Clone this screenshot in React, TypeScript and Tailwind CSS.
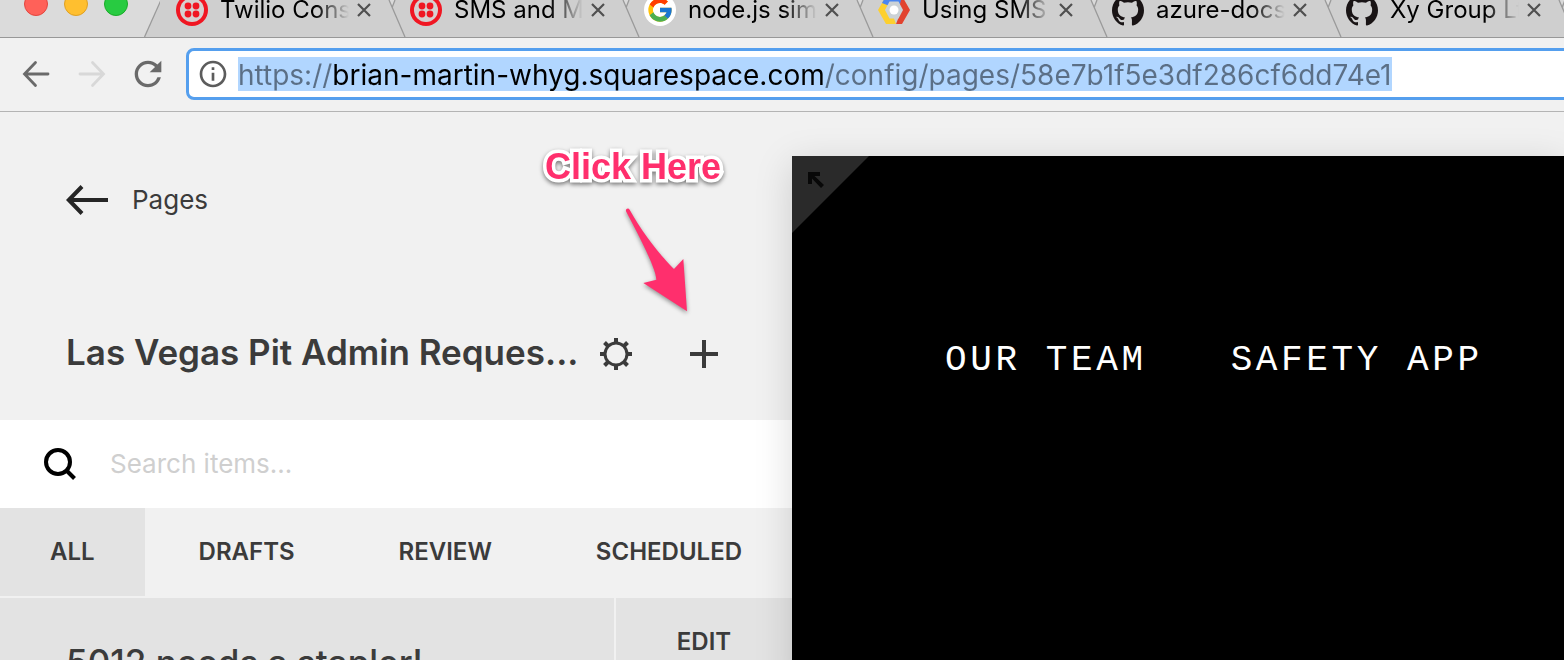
import React from "react";
import { FcGoogle } from "react-icons/fc";
import { SiGithub } from "react-icons/si";
import { MdInfoOutline, MdRefresh } from "react-icons/md";

function TwilioIcon() {
  return (
    <svg viewBox="0 0 32 32" className="size-8" aria-hidden="true">
      <circle cx="16" cy="16" r="16" fill="#f01622" />
      <circle cx="16" cy="16" r="12" fill="#d6d0d0" />
      <g fill="#f01622">
        <circle cx="12" cy="12" r="3.4" />
        <circle cx="20" cy="12" r="3.4" />
        <circle cx="12" cy="20" r="3.4" />
        <circle cx="20" cy="20" r="3.4" />
      </g>
    </svg>
  );
}

function GoogleIcon() {
  return (
    <span className="flex size-8 items-center justify-center rounded-full bg-white">
      <FcGoogle className="size-7" aria-hidden="true" />
    </span>
  );
}

function CloudIcon() {
  return (
    <svg viewBox="0 0 32 32" className="size-8" aria-hidden="true">
      <polygon points="8,2 0,16 8,30 18,30 13,16" fill="#fdd02f" />
      <polygon points="8,2 4,9 14,13 24,9 26,5 24,2" fill="#4a86f0" />
      <polygon points="24,2 32,16 24,30 18,30 22,20 22,10" fill="#e2432f" />
      <polygon points="11.5,7.5 20.5,7.5 25,16 20.5,24.5 11.5,24.5 7,16" fill="#cbd2d6" />
      <circle cx="16" cy="16" r="4.5" fill="#ffffff" />
    </svg>
  );
}

function GithubIcon() {
  return <SiGithub className="size-8 text-[#191415]" aria-hidden="true" />;
}

const tabs = [
  { title: "Twilio Cons", icon: <TwilioIcon /> },
  { title: "SMS and M", icon: <TwilioIcon /> },
  { title: "node.js sim", icon: <GoogleIcon /> },
  { title: "Using SMS", icon: <CloudIcon /> },
  { title: "azure-docs", icon: <GithubIcon /> },
  { title: "Xy Group Lt", icon: <GithubIcon /> },
];

function BrowserTab({ title, icon }: { title: string; icon: React.ReactNode }) {
  return (
    <div className="relative flex h-5 w-[234px] flex-none items-center pl-4">
      <span className="flex-none">{icon}</span>
      <a
        href="#"
        className="ml-3 w-[129px] flex-none whitespace-nowrap text-2xl text-black [mask-image:linear-gradient(to_right,black_74%,transparent)]"
      >
        {title}
      </a>
      <button type="button" aria-label={`Close ${title}`} className="ml-2 flex-none">
        <svg viewBox="0 0 14 14" className="size-[14px]" aria-hidden="true">
          <path d="M1 1L13 13M13 1L1 13" stroke="#505050" strokeWidth="2.2" />
        </svg>
      </button>
      <svg viewBox="0 0 20 37" className="absolute top-0 -right-3 h-[37px] w-5" aria-hidden="true">
        <path d="M3 0L6.5 7L9 0Z" fill="#dadada" />
        <path d="M3 0L19 37M9 0L6.3 7" fill="none" stroke="#9a9a9a" strokeWidth="1.3" />
      </svg>
    </div>
  );
}

function TabStrip() {
  return (
    <div className="flex h-[38px] flex-none overflow-hidden border-b border-[#989898] bg-[#dbdbdb]">
      <div className="flex h-2 w-[144px] flex-none items-center gap-4 pl-6">
        <button type="button" aria-label="Close window" className="size-6 flex-none rounded-full border border-[#e2463f] bg-[#ff6159]" />
        <button type="button" aria-label="Minimise window" className="size-6 flex-none rounded-full border border-[#dfa023] bg-[#ffbf2f]" />
        <button type="button" aria-label="Zoom window" className="size-6 flex-none rounded-full border border-[#1aab29] bg-[#28cb41]" />
      </div>
      <svg viewBox="0 0 16 37" className="h-[37px] w-4 flex-none" aria-hidden="true">
        <path d="M17 0L0.5 37H18V0Z" fill="#cfcfcf" />
        <path d="M17 0L0.5 37" stroke="#9a9a9a" strokeWidth="1.3" />
      </svg>
      <nav aria-label="Tabs" className="flex flex-1 bg-[#cfcfcf]">
        {tabs.map((tab) => (
          <BrowserTab key={tab.title} {...tab} />
        ))}
      </nav>
    </div>
  );
}

function Toolbar() {
  return (
    <div className="flex h-[74px] flex-none items-center overflow-hidden border-b border-[#b4b4b4] bg-[#f1f1f1] pb-[2px]">
      <button type="button" aria-label="Back" className="ml-[22px]">
        <svg viewBox="0 0 28 28" className="size-7" fill="none" stroke="#6a6a6a" strokeWidth="2.8" strokeLinecap="round" aria-hidden="true">
          <path d="M26 14H3M13.5 2.5L2.5 14L13.5 25.5" />
        </svg>
      </button>
      <button type="button" aria-label="Forward" className="ml-7">
        <svg viewBox="0 0 28 28" className="size-7" fill="none" stroke="#d8d8d8" strokeWidth="2.8" strokeLinecap="round" aria-hidden="true">
          <path d="M2 14H25M14.5 2.5L25.5 14L14.5 25.5" />
        </svg>
      </button>
      <button type="button" aria-label="Reload" className="ml-[22px]">
        <MdRefresh className="size-10 text-[#6a6a6a]" aria-hidden="true" />
      </button>
      <div className="-mr-2 ml-[18px] flex h-[52px] flex-1 items-center rounded-lg border-[3px] border-[#559fee] bg-white pl-2">
        <MdInfoOutline className="size-8 flex-none text-[#5c5c5c]" aria-hidden="true" />
        <div className="ml-[9px] flex h-[34px] items-center bg-[#b1d6ff]">
          <input
            type="text"
            aria-label="Address"
            defaultValue="https://brian-martin-whyg.squarespace.com/config/pages/58e7b1f5e3df286cf6dd74e1"
            className="h-[34px] bg-[linear-gradient(to_right,#5b6f86_94px,#000_94px,#000_586px,#5b6f86_586px)] bg-clip-text pt-[2px] text-[28px] text-transparent outline-none [field-sizing:content]"
          />
        </div>
      </div>
    </div>
  );
}

const filters = ["ALL", "DRAFTS", "REVIEW", "SCHEDULED"];

function Sidebar() {
  return (
    <aside className="flex min-w-0 flex-col text-[#3b3b3b]">
      <div className="flex h-[176px] flex-none items-center pl-[66px]">
        <a href="#" className="flex items-center gap-6 text-[26px]">
          <svg viewBox="0 0 42 30" className="h-[30px] w-[42px]" fill="none" stroke="#262626" strokeWidth="4" aria-hidden="true">
            <path d="M42 15H3M16 1.5L2.8 15L16 28.5" />
          </svg>
          <span className="pb-[2px]">Pages</span>
        </a>
      </div>
      <div className="flex h-[132px] flex-none items-center pl-[66px]">
        <h1 className="w-[510px] pb-1 text-[35px] font-semibold whitespace-nowrap">Las Vegas Pit Admin Reques...</h1>
        <button type="button" aria-label="Settings" className="ml-6">
          <svg viewBox="-16 -16 32 32" className="size-8" fill="none" stroke="#3b3b3b" aria-hidden="true">
            <circle r="11" strokeWidth="3" />
            <path
              strokeWidth="4"
              d="M0-16V-11M0 16V11M-16 0H-11M16 0H11M-11.5-11.5L-8-8M11.5-11.5L8-8M-11.5 11.5L-8 8M11.5 11.5L8 8"
            />
          </svg>
        </button>
        <button type="button" aria-label="Add item" className="ml-[58px]">
          <svg viewBox="0 0 28 28" className="size-7" stroke="#3b3b3b" strokeWidth="4" aria-hidden="true">
            <path d="M14 0V28M0 14H28" />
          </svg>
        </button>
      </div>
      <label className="flex h-[88px] flex-none items-center gap-[34px] bg-white pl-11">
        <svg viewBox="0 0 32 32" className="size-8 flex-none" fill="none" stroke="#000" strokeWidth="4" aria-hidden="true">
          <circle cx="14" cy="14" r="12" />
          <path d="M22.5 22.5L30.5 30.5" />
        </svg>
        <input
          type="search"
          aria-label="Search items"
          placeholder="Search items..."
          className="min-w-0 flex-1 pb-[2px] text-[26px] outline-none placeholder:text-[#cfcfcf]"
        />
      </label>
      <div className="flex h-[90px] flex-none justify-between border-b-2 border-[#f1f1f1]">
        {filters.map((name, i) => (
          <button
            key={name}
            type="button"
            className={`px-[50px] text-2xl font-semibold ${i === 0 ? "bg-[#e3e3e3]" : ""}`}
          >
            {name}
          </button>
        ))}
      </div>
      <div className="flex flex-1 gap-[2px]">
        <a href="#" className="min-w-0 flex-1 bg-[#e3e3e3] pt-[38px] pl-[66px] text-[35px] font-medium whitespace-nowrap">
          5012 needs a stapler!
        </a>
        <div className="w-44 flex-none bg-[#e3e3e3]">
          <button type="button" className="h-[88px] w-full text-2xl font-semibold">
            EDIT
          </button>
        </div>
      </div>
    </aside>
  );
}

function Preview() {
  return (
    <main className="relative z-10 mt-11 bg-black shadow-[0_8px_36px_rgba(0,0,0,0.15)]">
      <button type="button" aria-label="Expand preview" className="absolute top-0 left-0">
        <svg viewBox="0 0 77 77" className="size-[77px]" aria-hidden="true">
          <path d="M0 0H77L0 77Z" fill="#2a2a2a" />
          <path d="M16 16H28V20H22.5L32 29L29 32L20 22.5V28H16Z" fill="#080808" />
        </svg>
      </button>
      <nav className="flex gap-[84px] overflow-hidden pt-[185px] pl-[153px] font-['Liberation_Mono',monospace] text-4xl tracking-widest whitespace-nowrap text-white">
        <a href="#">OUR TEAM</a>
        <a href="#">SAFETY APP</a>
      </nav>
    </main>
  );
}

function Callout() {
  return (
    <div className="pointer-events-none absolute top-[35px] left-[545px] z-20">
      <p className="font-['Liberation_Sans',sans-serif] text-4xl font-bold text-[#ff2f6d] drop-shadow-[0_2px_2px_rgba(0,0,0,0.5)] [-webkit-text-stroke:7px_white] [paint-order:stroke_fill]">
        Click Here
      </p>
      <svg
        viewBox="315 230 192 324"
        className="mt-5 ml-20 h-[108px] w-16 drop-shadow-[0_2px_2px_rgba(0,0,0,0.4)]"
        aria-hidden="true"
      >
        <path
          d="M318 243C316 235 325 231 329 238C365 305 425 380 462 416L490 386L501 543L370 458L409 448C408 420 375 350 318 243Z"
          fill="#ff2f6d"
        />
      </svg>
    </div>
  );
}

export default function App() {
  return (
    <div className="flex h-screen flex-col overflow-hidden bg-[#f1f1f1] font-['Inter',sans-serif]">
      <TabStrip />
      <Toolbar />
      <div className="relative grid flex-1 grid-cols-[792px_minmax(0,1fr)]">
        <Sidebar />
        <Preview />
        <Callout />
      </div>
    </div>
  );
}
